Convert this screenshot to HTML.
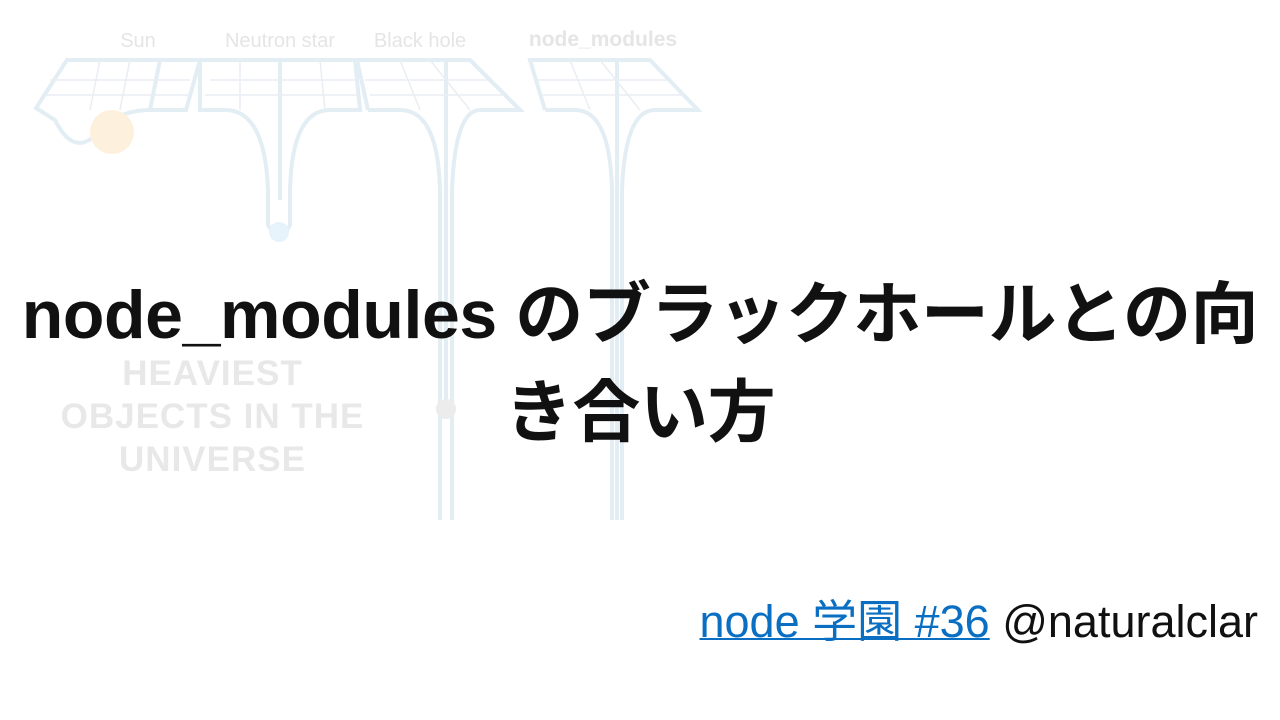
<!DOCTYPE html>
<html><head><meta charset="utf-8"><style>
html,body{margin:0;padding:0;width:1280px;height:720px;background:#fff;overflow:hidden;position:relative;font-family:"Liberation Sans","Noto Sans CJK JP",sans-serif}
svg{position:absolute;left:0;top:0}
.h{position:absolute;left:-20px;width:1320px;top:266px;text-align:center;font-weight:bold;font-size:68px;line-height:98px;color:#111;letter-spacing:-0.4px;white-space:nowrap}
.f{position:absolute;right:22px;top:585px;font-size:45px;color:#111;white-space:nowrap}
.f a{color:#0a6fc2;text-decoration:underline;text-decoration-thickness:2px}
.u{position:absolute;left:40px;width:345px;top:352px;text-align:center;font-weight:bold;font-size:35px;line-height:43px;color:#e8e8e8;letter-spacing:1px}
</style></head><body>
<svg width="1280" height="720" viewBox="0 0 1280 720">
<g font-family="Liberation Sans, sans-serif" font-size="20" fill="#e5e5e5" text-anchor="middle">
<text x="138" y="47">Sun</text><text x="280" y="47">Neutron star</text><text x="420" y="47">Black hole</text>
<text x="603" y="46" font-weight="bold" font-size="21">node_modules</text></g>
<g fill="none" stroke="#e3edf4" stroke-width="4">
<path d="M67 60 L160 60 L150 110 Q120 110 100 130 Q75 160 55 120 L36 108 Z"/>
<path d="M160 60 L200 60 L186 110 L150 110"/>
<path d="M200 60 L355 60 L360 110 L330 110 Q292 110 290 190 L290 225 Q280 245 268 225 L268 190 Q265 110 225 110 L200 110 Z"/>
<path d="M280 60 L280 200"/>
<path d="M368 110 L400 110 Q438 110 440 190 L440 520 M452 520 L452 190 Q455 110 480 110 L520 110 L470 60 L357 60 L368 110"/>
<path d="M446 60 L446 400"/>
<path d="M545 110 L575 110 Q610 110 612 190 L612 520 M622 520 L622 190 Q625 110 655 110 L698 110 L650 60 L530 60 L545 110"/>
<path d="M617 60 L617 520"/>
</g>
<g fill="none" stroke="#e8eef3" stroke-width="1.5">
<path d="M50 80 L190 80 M45 95 L190 95 M210 80 L355 80 M205 95 L358 95 M365 80 L490 80 M370 95 L505 95 M535 80 L668 80 M540 95 L684 95"/>
<path d="M100 60 L90 110 M130 60 L120 110 M240 60 L240 110 M320 60 L325 110 M400 60 L420 110 M430 60 L470 110 M570 60 L590 110 M600 60 L640 110"/>
</g>
<circle cx="112" cy="132" r="22" fill="#fdf1dd"/>
<circle cx="279" cy="232" r="10" fill="#e6f3fb"/>
<circle cx="446" cy="409" r="10" fill="#ececec"/>
</svg>
<div class="u">HEAVIEST<br>OBJECTS IN THE<br>UNIVERSE</div>
<div class="h">node_modules のブラックホールとの向<br>き合い方</div>
<div class="f"><a>node 学園 #36</a> @naturalclar</div>
</body></html>
